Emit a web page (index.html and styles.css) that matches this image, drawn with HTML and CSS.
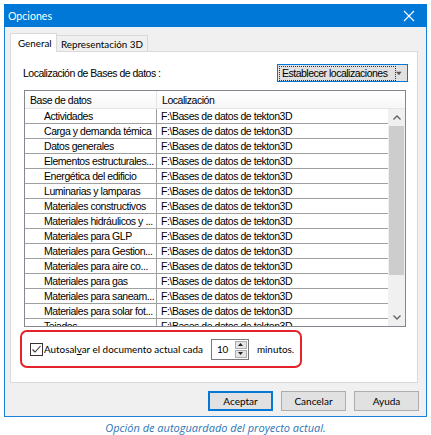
FILE: index.html
```html
<!DOCTYPE html>
<html lang="es">
<head>
<meta charset="utf-8">
<title>Opciones</title>
<link rel="stylesheet" href="styles.css">
</head>
<body>
<div class="window">
  <div class="titlebar">
    <span class="title">Opciones</span>
    <svg class="close" width="12" height="12" viewBox="0 0 12 12"><path d="M1 1L11 11M11 1L1 11" stroke="#fff" stroke-width="1.2" fill="none"/></svg>
  </div>
  <div class="content">
    <div class="tabs">
      <div class="tab active">General</div>
      <div class="tab">Representación 3D</div>
    </div>
    <div class="panel">
      <div class="toprow">
        <span class="label">Localización de Bases de datos :</span>
        <div class="dropdown">
          <span class="focus">Establecer localizaciones</span>
          <svg width="8" height="5" viewBox="0 0 8 5"><path d="M0 0H8L4 5Z" fill="#555"/></svg>
        </div>
      </div>
      <div class="list">
        <div class="header">
          <div class="col1">Base de datos</div>
          <div class="col2">Localización</div>
        </div>
        <div class="listbody">
          <div class="rows">
            <div class="row"><div class="c1">Actividades</div><div class="c2">F:\Bases de datos de tekton3D</div></div>
            <div class="row"><div class="c1">Carga y demanda témica</div><div class="c2">F:\Bases de datos de tekton3D</div></div>
            <div class="row"><div class="c1">Datos generales</div><div class="c2">F:\Bases de datos de tekton3D</div></div>
            <div class="row"><div class="c1">Elementos estructurales...</div><div class="c2">F:\Bases de datos de tekton3D</div></div>
            <div class="row"><div class="c1">Energética del edificio</div><div class="c2">F:\Bases de datos de tekton3D</div></div>
            <div class="row"><div class="c1">Luminarias y lamparas</div><div class="c2">F:\Bases de datos de tekton3D</div></div>
            <div class="row"><div class="c1">Materiales constructivos</div><div class="c2">F:\Bases de datos de tekton3D</div></div>
            <div class="row"><div class="c1">Materiales hidráulicos y ...</div><div class="c2">F:\Bases de datos de tekton3D</div></div>
            <div class="row"><div class="c1">Materiales para GLP</div><div class="c2">F:\Bases de datos de tekton3D</div></div>
            <div class="row"><div class="c1">Materiales para Gestion...</div><div class="c2">F:\Bases de datos de tekton3D</div></div>
            <div class="row"><div class="c1">Materiales para aire co...</div><div class="c2">F:\Bases de datos de tekton3D</div></div>
            <div class="row"><div class="c1">Materiales para gas</div><div class="c2">F:\Bases de datos de tekton3D</div></div>
            <div class="row"><div class="c1">Materiales para saneam...</div><div class="c2">F:\Bases de datos de tekton3D</div></div>
            <div class="row"><div class="c1">Materiales para solar fot...</div><div class="c2">F:\Bases de datos de tekton3D</div></div>
            <div class="row"><div class="c1">Tejados</div><div class="c2">F:\Bases de datos de tekton3D</div></div>
          </div>
          <div class="scrollbar">
            <div class="arrow"><svg width="8" height="5" viewBox="0 0 8 5"><path d="M0.5 4.5L4 1L7.5 4.5" stroke="#606060" stroke-width="1.3" fill="none"/></svg></div>
            <div class="track"><div class="thumb"></div></div>
            <div class="arrow"><svg width="8" height="5" viewBox="0 0 8 5"><path d="M0.5 0.5L4 4L7.5 0.5" stroke="#606060" stroke-width="1.3" fill="none"/></svg></div>
          </div>
        </div>
      </div>
      <div class="autosave">
        <span class="checkbox"><svg width="11" height="11" viewBox="0 0 11 11"><path d="M1.5 5.5L4 8L9.5 2" stroke="#333" stroke-width="1.1" fill="none"/></svg></span>
        <span class="autolabel">Autosal<u>v</u>ar el documento actual cada</span>
        <div class="spin">
          <span class="spinval">10</span>
          <div class="spinbtns">
            <div class="sbtn"><svg width="5" height="3" viewBox="0 0 5 3"><path d="M0 3H5L2.5 0Z" fill="#222"/></svg></div>
            <div class="sbtn"><svg width="5" height="3" viewBox="0 0 5 3"><path d="M0 0H5L2.5 3Z" fill="#222"/></svg></div>
          </div>
        </div>
        <span class="minutes">minutos.</span>
      </div>
    </div>
    <div class="buttons">
      <div class="btn default">Aceptar</div>
      <div class="btn">Cancelar</div>
      <div class="btn">Ayuda</div>
    </div>
  </div>
</div>
<div class="caption">Opción de autoguardado del proyecto actual.</div>
</body>
</html>
```
FILE: styles.css
```css
html, body {
  margin: 0;
  padding: 0;
  background: #fff;
}
body {
  width: 431px;
  height: 435px;
  overflow: hidden;
  font-family: Lato, "Noto Sans", sans-serif;
  font-size: 10px;
  color: #000;
  white-space: nowrap;
}
.window {
  margin: 4px 0 0 4px;
  width: 423px;
  height: 413px;
  box-sizing: border-box;
  border: 1px solid #1a82d6;
  border-top: none;
  background: #f0f0f0;
  display: flex;
  flex-direction: column;
}
.titlebar {
  height: 23px;
  background: #0078d7;
  margin: 0 -1px;
  display: flex;
  align-items: center;
  justify-content: space-between;
  padding: 0 12px 0 4px;
  color: #fff;
  font-size: 10.6px;
}
.close { display: block; }
.content {
  padding: 6px 8px 0 5px;
  display: flex;
  flex-direction: column;
}
.tabs {
  display: flex;
  align-items: flex-end;
  height: 19px;
  margin-bottom: -1px;
}
.tab {
  box-sizing: border-box;
  height: 17px;
  border: 1px solid #d9d9d9;
  border-bottom: none;
  background: #f0f0f0;
  padding: 0 4px;
  display: flex;
  align-items: center;
  font-size: 9.8px;
  margin-left: -1px;
}
.tab.active {
  height: 19px;
  background: #fff;
  position: relative;
  z-index: 1;
  padding: 0 0 0 7px;
  margin-left: 0;
  width: 47px;
}
.panel {
  height: 332px;
  box-sizing: border-box;
  border: 1px solid #d9d9d9;
  background: #fff;
  display: flex;
  flex-direction: column;
}
.toprow {
  margin-top: 12px;
  padding: 0 9px 0 12px;
  height: 18px;
  display: flex;
  align-items: center;
  justify-content: space-between;
  font-family: "Liberation Sans", Arial, sans-serif;
  font-size: 10.5px;
  letter-spacing: -0.5px;
}
.dropdown {
  box-sizing: border-box;
  width: 131px;
  height: 18px;
  border: 1px solid #0078d7;
  background: #e1e1e1;
  display: flex;
  align-items: center;
  justify-content: space-between;
  padding: 1px 5px 1px 1px;
}
.focus {
  border: 1px dotted #333;
  padding: 0 8px 0 2px;
  line-height: 13px;
}
.list {
  margin: 8px 11px 0 13px;
  height: 237px;
  box-sizing: border-box;
  border: 1px solid #828790;
  display: flex;
  flex-direction: column;
  overflow: hidden;
  font-family: "Liberation Sans", Arial, sans-serif;
  font-size: 10.5px;
  letter-spacing: -0.45px;
}
.header {
  height: 18px;
  flex: none;
  display: flex;
  background: linear-gradient(#fff, #f7f7f7);
  border-bottom: 1px solid #e5e5e5;
  box-sizing: border-box;
}
.header .col1 {
  width: 132px;
  box-sizing: border-box;
  padding-left: 5px;
  border-right: 1px solid #e5e5e5;
  display: flex;
  align-items: center;
}
.header .col2 {
  padding-left: 5px;
  display: flex;
  align-items: center;
}
.listbody {
  flex: 1;
  display: flex;
  overflow: hidden;
}
.rows {
  flex: 1;
  overflow: hidden;
}
.row {
  height: 15px;
  box-sizing: border-box;
  border-bottom: 1px solid #a0a0a0;
  display: flex;
  align-items: center;
}
.c1 {
  width: 132px;
  box-sizing: border-box;
  height: 100%;
  padding-left: 19px;
  border-right: 1px solid #a0a0a0;
  display: flex;
  align-items: center;
  overflow: hidden;
}
.c2 {
  padding-left: 4px;
}
.scrollbar {
  width: 17px;
  flex: none;
  background: #f0f0f0;
  display: flex;
  flex-direction: column;
}
.arrow {
  height: 17px;
  display: flex;
  align-items: center;
  justify-content: center;
  flex: none;
}
.track {
  flex: 1;
}
.thumb {
  height: 149px;
  margin: 0 1px;
  background: #cdcdcd;
}
.autosave {
  margin: 3px 0 0 9px;
  width: 282px;
  height: 38px;
  box-sizing: border-box;
  border: 2px solid #e4222a;
  border-radius: 7px;
  display: flex;
  align-items: center;
  padding-left: 8px;
  font-size: 9.9px;
}
.checkbox {
  width: 13px;
  height: 13px;
  flex: none;
  box-sizing: border-box;
  border: 1px solid #333;
  display: flex;
  align-items: center;
  justify-content: center;
  margin-right: 1px;
}
.checkbox svg { display: block; }
.autolabel u { text-decoration-thickness: 1px; }
.spin {
  margin-left: 8px;
  width: 38px;
  height: 21px;
  flex: none;
  box-sizing: border-box;
  border: 1px solid #7a7a7a;
  display: flex;
}
.spinval {
  flex: 1;
  padding-left: 5px;
  display: flex;
  align-items: center;
}
.spinbtns {
  width: 14px;
  display: flex;
  flex-direction: column;
  gap: 1px;
  padding: 1px;
  box-sizing: border-box;
}
.sbtn {
  flex: 1;
  border: 1px solid #adadad;
  background: #e5e5e5;
  display: flex;
  align-items: center;
  justify-content: center;
}
.sbtn svg { display: block; }
.minutes { margin-left: 8px; }
.buttons {
  margin-top: 8px;
  margin-right: -1px;
  display: flex;
  justify-content: flex-end;
  gap: 8px;
}
.btn {
  width: 65px;
  height: 20px;
  box-sizing: border-box;
  border: 1px solid #adadad;
  background: #e1e1e1;
  display: flex;
  align-items: center;
  justify-content: center;
  font-size: 10px;
}
.btn.default {
  border: 2px solid #0078d7;
}
.caption {
  margin-top: 3px;
  text-align: center;
  font-family: "Open Sans", sans-serif;
  font-style: italic;
  font-size: 11px;
  color: #2e75b6;
}
```
